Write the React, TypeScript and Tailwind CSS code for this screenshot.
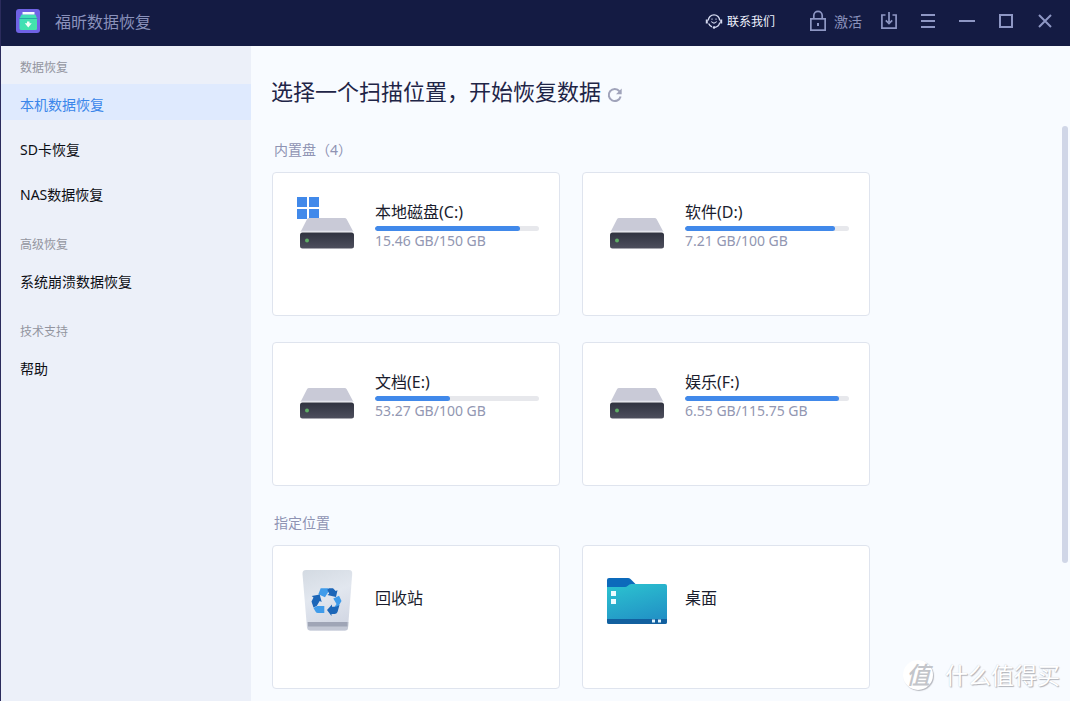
import type { ReactNode } from 'react';

type Disk = { name: string; usage: string; fill: number; system?: boolean };

const disks: Disk[] = [
  { name: '本地磁盘(C:)', usage: '15.46 GB/150 GB', fill: 88.4, system: true },
  { name: '软件(D:)', usage: '7.21 GB/100 GB', fill: 91.5 },
  { name: '文档(E:)', usage: '53.27 GB/100 GB', fill: 45.7 },
  { name: '娱乐(F:)', usage: '6.55 GB/115.75 GB', fill: 94 },
];

const groups = [
  { title: '数据恢复', items: ['本机数据恢复', 'SD卡恢复', 'NAS数据恢复'] },
  { title: '高级恢复', items: ['系统崩溃数据恢复'] },
  { title: '技术支持', items: ['帮助'] },
];

function LogoIcon() {
  return (
    <svg width="24" height="24" viewBox="0 0 24 24" aria-hidden="true">
      <defs>
        <linearGradient id="logo-box" x1="0" y1="0" x2="1" y2="1">
          <stop offset="0" stopColor="#3fdcbc" />
          <stop offset="1" stopColor="#45e6a6" />
        </linearGradient>
      </defs>
      <rect width="24" height="24" rx="3" fill="#6f62e4" />
      <path d="M5.500 5.500h14L21 9.500v10q0 1.500-1.500 1.500h-14Q3.500 21 3.500 19.500v-10z" fill="url(#logo-box)" />
      <path d="M6.500 3h12v2.500h-12z" fill="#f4fffd" />
      <path d="M3 9.500h18.500" stroke="#2aa7a6" strokeWidth="1" />
      <path d="M11 12.500h2.500v1.700h2.200L12.250 18.500 8.800 14.200H11z" fill="#f2fff9" />
    </svg>
  );
}

function HeadsetIcon() {
  return (
    <svg width="18" height="18" viewBox="0 0 18 18" fill="none" stroke="#d5daf0" strokeWidth="1.300" aria-hidden="true">
      <path d="M3.300 8.500a5.700 5.700 0 0 1 11.400 0" />
      <path d="M14.700 10.500Q14 15 9 15.500" />
      <path d="M1.800 7.500v4M16.200 7.500v4" strokeWidth="2" />
      <path d="M3.600 11.500Q4.700 14 7 14.800" />
      <path d="M6.300 9.500Q9 12.700 11.700 9.500" strokeWidth="1.100" />
      <path d="M7 6.500v1.300M11 6.500v1.300" strokeWidth="1" />
      <circle cx="9" cy="15.500" r="1.300" fill="#d5daf0" stroke="none" />
    </svg>
  );
}

function LockIcon() {
  return (
    <svg width="18" height="22" viewBox="0 0 18 22" fill="none" stroke="#8e97c4" strokeWidth="1.700" aria-hidden="true">
      <rect x="1.850" y="8.850" width="14.300" height="11.300" />
      <path d="M4.800 8.500V5.500a4.200 4.200 0 0 1 8.400 0v3" />
      <path d="M9 13v3" strokeWidth="2" />
    </svg>
  );
}

function DownloadIcon() {
  return (
    <svg width="18" height="18" viewBox="0 0 18 18" fill="none" stroke="#8e97c4" strokeWidth="1.700" aria-hidden="true">
      <path d="M5.500 3H1.900v13.200h14.200V3h-3.600" />
      <path d="M9 0v10M5.800 8.300 9 11.500l3.200-3.200" />
    </svg>
  );
}

function LineIcon({ d }: { d: string }) {
  return (
    <svg width="18" height="18" viewBox="0 0 18 18" fill="none" stroke="#8e97c4" strokeWidth="2" aria-hidden="true">
      <path d={d} />
    </svg>
  );
}

function RefreshIcon() {
  return (
    <svg width="16" height="16" viewBox="0 0 16 16" fill="none" aria-hidden="true">
      <path d="M13.600 9.500A6 6 0 1 1 12.500 4.300" stroke="#a0a3ba" strokeWidth="2" />
      <path d="M14.700 1.500v5.700H9z" fill="#a0a3ba" />
    </svg>
  );
}

function DriveIcon({ system }: { system?: boolean }) {
  return (
    <svg width="64" height="72" viewBox="0 0 64 72" className="shrink-0" aria-hidden="true">
      <defs>
        <linearGradient id="drive-front" x1="0" y1="0" x2="0" y2="1">
          <stop offset="0" stopColor="#303340" />
          <stop offset="1" stopColor="#4d4f5d" />
        </linearGradient>
      </defs>
      {system && <path d="M2 8h10v10H2zM14 8h10v10H14zM2 20h10v10H2zM14 20h10v10H14z" fill="#4189ea" />}
      <path d="M14 29h35.500q1.500 0 2.200 1.300L58.500 43H5.500L12 30.300Q12.600 29 14 29z" fill="#c9cad7" />
      <path d="M6 42.500h52" stroke="#e5e6ed" strokeWidth="1.500" />
      <rect x="5" y="43.500" width="54" height="16" rx="2.500" fill="url(#drive-front)" />
      <circle cx="12" cy="51.500" r="2" fill="#5fae66" />
    </svg>
  );
}

function BinIcon() {
  return (
    <svg width="64" height="72" viewBox="0 0 64 72" className="shrink-0" aria-hidden="true">
      <defs>
        <linearGradient id="bin-body" x1="0" y1="0" x2="0.300" y2="1">
          <stop offset="0" stopColor="#d3dae2" />
          <stop offset="0.500" stopColor="#e2e7ef" />
          <stop offset="1" stopColor="#d3d8e4" />
        </linearGradient>
      </defs>
      <path d="M11 8h43q3.500 0 3.200 4L53 66q-.3 2.500-3 2.500H15q-2.700 0-3-2.500L7.500 12q-.3-4 3.500-4z" fill="url(#bin-body)" />
      <path d="M12 60h41.500l-.5 6q-.3 2.500-3 2.500H15.500q-2.600 0-2.900-2.500z" fill="#c3c8d5" />
      <path d="M13 60h39.500v4.500H13z" fill="#9fa5b6" />
      <path d="M25.700 26.300h7.500l1 2.200-4.200 6.800-6.700-3z" fill="#3f9bea" />
      <path d="M32.300 27.800 34 26.300h4l2.700 2.700 1.800-.7-1.500 6.700-8.700-2 1.900-1.300z" fill="#1c66b8" />
      <path d="M38.300 36.500l5.700-2.800 2.500 5.300-5 8.500-3-1 3-4.500z" fill="#3f9bea" />
      <path d="M44.500 43l-2 7q-.8 2-3 2h-3v2L32 48l5-5.500v2.200h4z" fill="#1c66b8" />
      <path d="M22.300 44h7v7h-6.500q-1.300 0-2-1l-2.300-4z" fill="#3f9bea" />
      <path d="M18.500 45.500l-2-6 2-4-1.800-1.500 8-1.500 2 7.500-2-1-3 5z" fill="#1c66b8" />
    </svg>
  );
}

function FolderIcon() {
  return (
    <svg width="64" height="72" viewBox="0 0 64 72" className="shrink-0" aria-hidden="true">
      <defs>
        <linearGradient id="folder-body" x1="0.300" y1="0" x2="0.700" y2="1">
          <stop offset="0" stopColor="#2bbfcf" />
          <stop offset="1" stopColor="#218fc5" />
        </linearGradient>
      </defs>
      <path d="M4 16h19q1.500 0 2.500 1l5 5v4H2v-8q0-2 2-2z" fill="#0c6abb" />
      <path d="M2 25h18q1.500 0 2.500-1l2-1.500q1-.5 2-.5H60q2 0 2 2v36q0 2-2 2H4q-2 0-2-2z" fill="url(#folder-body)" />
      <path d="M2 57h60v3q0 2-2 2H4q-2 0-2-2z" fill="#12609f" />
      <path d="M6 29h5v5H6zM6 37h5v5H6z" fill="#eefbff" />
      <path d="M47 57.500h3v3h-3zM53 57.500h3v3h-3z" fill="#dff4ff" />
    </svg>
  );
}

function TitleButton({ label, children }: { label: string; children: ReactNode }) {
  return (
    <button type="button" aria-label={label} className="flex h-10 w-[39px] items-center justify-center">
      {children}
    </button>
  );
}

function Card({ icon, name, children }: { icon: ReactNode; name: string; children?: ReactNode }) {
  return (
    <button
      type="button"
      className="flex h-36 items-start rounded border border-[#dfe4ee] bg-white pt-4 pr-5 pl-[22px] text-left"
    >
      <span className="flex min-w-0 flex-1 items-center gap-4">
        {icon}
        <span className="flex min-w-0 flex-1 flex-col">
          <span className="text-base leading-6 text-[#1a1d2e]">{name}</span>
          {children}
        </span>
      </span>
    </button>
  );
}

const cardGrid = 'grid grid-cols-[repeat(auto-fill,288px)] gap-x-[22px] gap-y-[26px]';

export default function App() {
  return (
    <div className="relative flex h-screen flex-col overflow-hidden border-l border-[#2b2b5c] bg-[#f8fbff] font-['Noto_Sans','Noto_Sans_CJK_SC',sans-serif]">
      <header className="flex h-[46px] shrink-0 items-center bg-[#141b43] pr-1.5 pb-1 pl-[15px]">
        <LogoIcon />
        <span className="ml-[15px] pt-0.5 text-base leading-6 text-[#8a91bb]">福昕数据恢复</span>
        <div className="ml-auto flex items-center">
          <button type="button" className="mr-[34px] flex items-center gap-1 text-xs text-[#f0f3ff]">
            <HeadsetIcon />
            <span className="pt-0.5">联系我们</span>
          </button>
          <button type="button" className="mr-[7px] flex items-center gap-[7px] text-sm text-[#8a91bb]">
            <LockIcon />
            <span className="pt-0.5">激活</span>
          </button>
          <TitleButton label="下载">
            <DownloadIcon />
          </TitleButton>
          <TitleButton label="菜单">
            <LineIcon d="M2 3h14M2 9h14M2 15h14" />
          </TitleButton>
          <TitleButton label="最小化">
            <LineIcon d="M1 9h16" />
          </TitleButton>
          <TitleButton label="最大化">
            <LineIcon d="M3 3h12v12H3z" />
          </TitleButton>
          <TitleButton label="关闭">
            <LineIcon d="M3 3l12 12M15 3 3 15" />
          </TitleButton>
        </div>
      </header>

      <div className="flex min-h-0 flex-1">
        <nav className="flex w-[250px] shrink-0 flex-col gap-[18px] bg-[#ecf0f9] pt-[5px]">
          {groups.map((group) => (
            <section key={group.title}>
              <h2 className="flex h-[33px] items-center pl-[19px] text-xs text-[#93959f]">{group.title}</h2>
              <ul className="flex flex-col gap-[9px]">
                {group.items.map((item) => (
                  <li key={item}>
                    <button
                      type="button"
                      className={
                        item === '本机数据恢复'
                          ? 'flex h-9 w-full items-center bg-[#dfeafe] pt-1.5 pl-[19px] text-sm text-[#3a86ea]'
                          : 'flex h-9 w-full items-center pt-1.5 pl-[19px] text-sm text-[#0c0e14]'
                      }
                    >
                      {item}
                    </button>
                  </li>
                ))}
              </ul>
            </section>
          ))}
        </nav>

        <main className="flex min-w-0 flex-1 flex-col">
          <div className="flex h-20 shrink-0 items-center gap-1.5 pt-2.5 pl-5">
            <h1 className="text-[22px] leading-8 text-[#1f2547]">选择一个扫描位置，开始恢复数据</h1>
            <button type="button" aria-label="刷新" className="pt-2">
              <RefreshIcon />
            </button>
          </div>
          <div className="flex min-h-0 flex-1 pr-0.5">
            <div className="min-w-0 flex-1 overflow-y-auto pb-16 pl-[21px] [scrollbar-width:none]">
              <h2 className="flex h-[46px] items-center pt-0.5 pl-0.5 text-sm text-[#8f93b3]">内置盘（4）</h2>
              <div className={cardGrid}>
                {disks.map((disk) => (
                  <Card key={disk.name} name={disk.name} icon={<DriveIcon system={disk.system} />}>
                    <span className="mt-0.5 mb-px block h-[5px] overflow-hidden rounded-full bg-[#e7e8ec]">
                      <span className="block h-full rounded-full bg-[#4189ea]" style={{ width: `${disk.fill}%` }} />
                    </span>
                    <span className="text-sm leading-[18px] text-[#9297b2]">{disk.usage}</span>
                  </Card>
                ))}
              </div>
              <h2 className="mt-3.5 flex h-[45px] items-center pl-0.5 text-sm text-[#8f93b3]">指定位置</h2>
              <div className={cardGrid}>
                <Card name="回收站" icon={<BinIcon />} />
                <Card name="桌面" icon={<FolderIcon />} />
              </div>
            </div>
            <div className="w-1.5 shrink-0">
              <div className="h-[76%] rounded-full bg-[#d0d6e7]" />
            </div>
          </div>
        </main>
      </div>

      <div className="pointer-events-none absolute right-2.5 bottom-2 flex items-center gap-3 text-white [text-shadow:1px_1px_1px_#b0b2b9,0_0_1px_#c4c6cc]">
        <span className="flex size-[30px] items-center justify-center rounded-full bg-white text-2xl leading-7 shadow-[1px_1px_1px_#b5b7be]">
          <span className="font-medium text-[#c3c5ca] italic [text-shadow:none]">值</span>
        </span>
        <span className="text-[23px] leading-9">什么值得买</span>
      </div>
    </div>
  );
}
